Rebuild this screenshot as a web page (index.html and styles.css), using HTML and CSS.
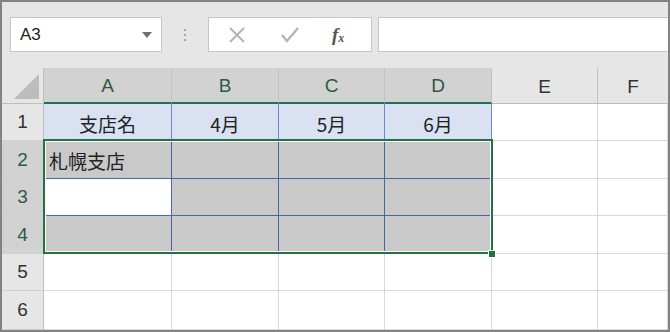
FILE: index.html
```html
<!DOCTYPE html>
<html lang="ja">
<head>
    <meta charset="UTF-8">
    <title>Excel</title>
    <link rel="stylesheet" href="styles.css">
</head>
<body>
    <div class="window">
        <div class="toolbar">
            <div class="name-box">
                <span>A3</span>
                <svg class="caret" width="10" height="6" viewBox="0 0 10 6"><path d="M0 0h10L5 6z" fill="#707070"/></svg>
            </div>
            <div class="dots"><i></i><i></i><i></i></div>
            <div class="fx-box">
                <svg class="btn" width="18" height="18" viewBox="0 0 18 18"><path d="M2 2L16 16M16 2L2 16" stroke="#b4b4b4" stroke-width="2" fill="none"/></svg>
                <svg class="btn" width="20" height="18" viewBox="0 0 20 18"><path d="M2 9l5 6L18 2" stroke="#b4b4b4" stroke-width="2.4" fill="none"/></svg>
                <span class="fx">f<sub>x</sub></span>
            </div>
            <div class="formula"></div>
        </div>

        <div class="sheet">
            <div class="corner"><span></span></div>
            <div class="col-head sel">A</div>
            <div class="col-head sel">B</div>
            <div class="col-head sel">C</div>
            <div class="col-head sel">D</div>
            <div class="col-head">E</div>
            <div class="col-head last">F</div>

            <div class="row-head">1</div>
            <div class="cell title">支店名</div>
            <div class="cell title">4月</div>
            <div class="cell title">5月</div>
            <div class="cell title">6月</div>
            <div class="cell"></div>
            <div class="cell"></div>

            <div class="row-head sel">2</div>
            <div class="cell fill left">札幌支店</div>
            <div class="cell fill"></div>
            <div class="cell fill"></div>
            <div class="cell fill"></div>
            <div class="cell"></div>
            <div class="cell"></div>

            <div class="row-head sel">3</div>
            <div class="cell fill active"></div>
            <div class="cell fill"></div>
            <div class="cell fill"></div>
            <div class="cell fill"></div>
            <div class="cell"></div>
            <div class="cell"></div>

            <div class="row-head sel">4</div>
            <div class="cell fill"></div>
            <div class="cell fill"></div>
            <div class="cell fill"></div>
            <div class="cell fill"></div>
            <div class="cell"></div>
            <div class="cell"></div>

            <div class="row-head">5</div>
            <div class="cell"></div>
            <div class="cell"></div>
            <div class="cell"></div>
            <div class="cell"></div>
            <div class="cell"></div>
            <div class="cell"></div>

            <div class="row-head">6</div>
            <div class="cell"></div>
            <div class="cell"></div>
            <div class="cell"></div>
            <div class="cell"></div>
            <div class="cell"></div>
            <div class="cell"></div>

            <div class="selection"></div>
            <div class="handle"></div>
        </div>
    </div>
</body>
</html>
```

FILE: styles.css
```css
* {
    box-sizing: border-box;
}
body {
    margin: 0;
    font-family: "Liberation Sans", "Noto Sans CJK JP", sans-serif;
}
.window {
    width: 670px;
    height: 332px;
    border: 2px solid #828282;
    background-color: #e6e6e6;
    overflow: hidden;
}
.toolbar {
    height: 66px;
    display: flex;
    align-items: flex-start;
    padding-top: 15px;
    padding-left: 8px;
}
.name-box {
    width: 152px;
    height: 35px;
    background-color: #fff;
    border: 1px solid #c6c6c6;
    display: flex;
    align-items: center;
    justify-content: space-between;
    padding: 0 9px 0 9px;
    font-size: 17px;
    color: #222;
}
.name-box .caret {
    margin-top: 1px;
}
.dots {
    width: 46px;
    height: 35px;
    display: flex;
    flex-direction: column;
    align-items: center;
    justify-content: center;
    gap: 3px;
}
.dots i {
    width: 2px;
    height: 2px;
    background-color: #a6a6a6;
}
.fx-box {
    width: 164px;
    height: 35px;
    background-color: #fff;
    border: 1px solid #c6c6c6;
    display: flex;
    align-items: center;
    padding-left: 19px;
}
.fx-box .btn:first-child {
    margin-right: 34px;
}
.fx-box .btn:nth-child(2) {
    margin-right: 32px;
}
.fx {
    font-family: "Liberation Serif", serif;
    font-style: italic;
    font-weight: bold;
    font-size: 19px;
    color: #555;
    line-height: 1;
}
.fx sub {
    font-size: 12px;
    vertical-align: -1px;
}
.formula {
    margin-left: 6px;
    flex: 1;
    height: 35px;
    background-color: #fff;
    border: 1px solid #c6c6c6;
    border-right: none;
}

.sheet {
    position: relative;
    display: grid;
    grid-template-columns: 42px 128px 107px 106px 107px 106px 1fr;
    grid-template-rows: 36px 37px 38px 37px 38px 37px 1fr;
    height: 262px;
    background-color: #fff;
    font-family: "Noto Sans CJK JP", sans-serif;
}
.corner {
    background-color: #e6e6e6;
    border-right: 1px solid #bdbdbd;
    border-bottom: 1px solid #bdbdbd;
    display: flex;
    align-items: flex-end;
    justify-content: flex-end;
    padding: 0 4px 4px 0;
}
.corner span {
    width: 0;
    height: 0;
    border-left: 25px solid transparent;
    border-bottom: 25px solid #bcbcbc;
}
.col-head {
    background-color: #e6e6e6;
    border-right: 1px solid #c2c2c2;
    border-bottom: 1px solid #bdbdbd;
    display: flex;
    align-items: center;
    justify-content: center;
    font-family: "Liberation Sans", sans-serif;
    font-size: 19px;
    color: #333;
    padding-top: 2px;
}
.col-head.last {
    border-right: none;
}
.col-head.sel {
    background-color: #d2d2d2;
    border-bottom: 2px solid #217346;
    color: #2d5a45;
}
.row-head {
    background-color: #e6e6e6;
    border-right: 1px solid #bdbdbd;
    border-bottom: 1px solid #cfcfcf;
    display: flex;
    align-items: center;
    justify-content: center;
    font-family: "Liberation Sans", sans-serif;
    font-size: 19px;
    color: #333;
}
.row-head.sel {
    background-color: #d2d2d2;
    color: #2d5a45;
}
.cell {
    border-right: 1px solid #d9d9d9;
    border-bottom: 1px solid #d9d9d9;
    display: flex;
    align-items: center;
    font-size: 19px;
    color: #222;
}
.cell.title {
    background-color: #d9e1f2;
    border-right: 1px solid #6a8bd0;
    border-bottom: none;
    justify-content: center;
    padding-top: 2px;
}
.cell.fill {
    background-color: #c9c9c9;
    border-right: 1px solid #4a66aa;
    border-bottom: 1px solid #4a66aa;
}
.cell.fill.active {
    background-color: #fff;
}
.cell.left {
    padding-left: 5px;
    padding-top: 2px;
}
.selection {
    position: absolute;
    left: 41px;
    top: 71px;
    width: 450px;
    height: 115px;
    border: 2px solid #217346;
    box-shadow: inset 0 0 0 1px #fff;
    pointer-events: none;
}
.handle {
    position: absolute;
    left: 486px;
    top: 182px;
    width: 8px;
    height: 8px;
    background-color: #217346;
    border: 1px solid #fff;
}
```
